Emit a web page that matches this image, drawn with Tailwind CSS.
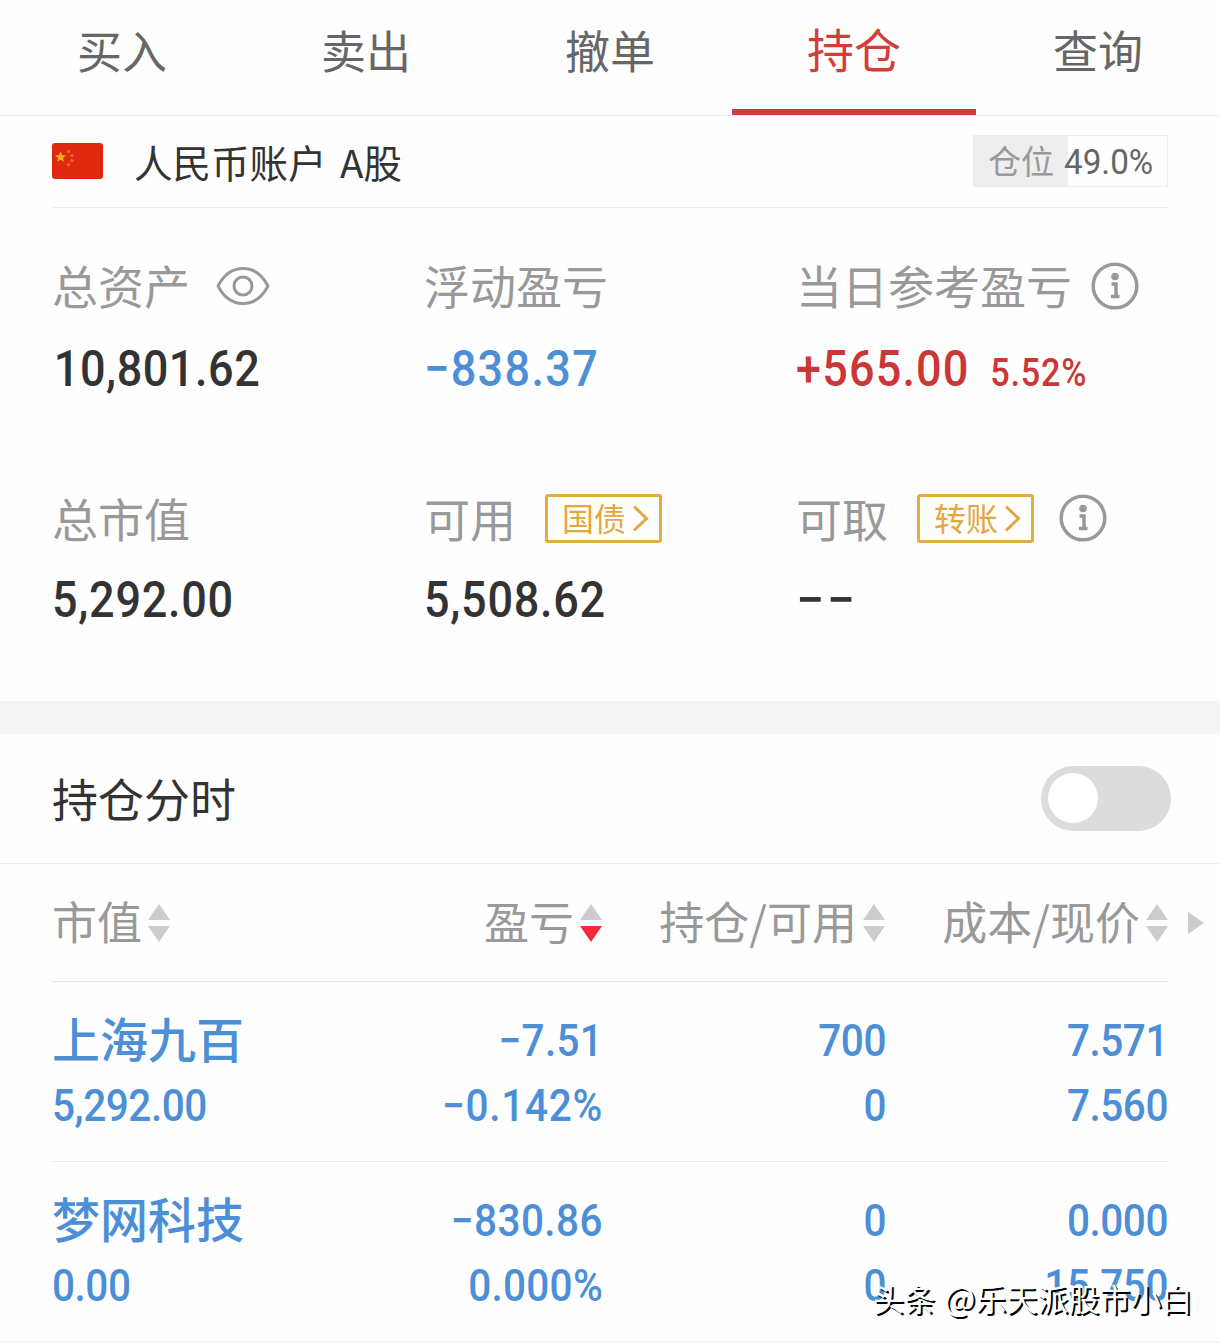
<!DOCTYPE html>
<html lang="zh-CN">
<head>
  <meta charset="UTF-8">
  <meta name="viewport" content="width=device-width, initial-scale=1.0">
  <title>持仓</title>
  <script src="https://cdn.jsdelivr.net/npm/@tailwindcss/browser@4"></script>
</head>
<body class="bg-[#fefefe] w-[1220px] h-[1343px] overflow-hidden relative font-['Noto_Sans_CJK_SC',sans-serif] text-[#333]">
  <!-- Tabs -->
  <nav class="grid grid-cols-5 h-[116px] border-b border-[#e9e9e9] text-[45px] leading-[100px] text-center text-[#666]">
    <a>买入</a>
    <a>卖出</a>
    <a>撤单</a>
    <a class="h-[115px] text-[47px] leading-[96px] text-[#d43c3c] border-b-6 border-[#d03c3e]">持仓</a>
    <a>查询</a>
  </nav>

  <!-- Account -->
  <div class="mx-[52px] h-[92px] flex items-center border-b border-[#eee]">
    <svg class="w-[51px] h-9 -mt-px" viewBox="0 0 51 36">
      <rect width="51" height="36" rx="3" fill="#de2910"/>
      <path d="M8.500 8.500l1.500 3.600 3.900.3-2.900 2.600.9 3.800-3.400-2.100-3.400 2.100.9-3.800-2.900-2.600 3.900-.3z" fill="#ffa928"/>
      <g fill="#f2662a">
        <circle cx="16.500" cy="8.500" r="1.600"/>
        <circle cx="20" cy="12.500" r="1.600"/>
        <circle cx="20" cy="17.500" r="1.600"/>
        <circle cx="16.500" cy="21.500" r="1.600"/>
      </g>
    </svg>
    <div class="ml-[31px] -mt-0.5 text-[38.500px] leading-[90px] [word-spacing:5px]">人民币账户 A股</div>
    <div class="ml-auto -mt-px w-[195px] h-[52px] flex items-center border border-[#eee] bg-linear-to-r from-[#eee] from-[94px] to-transparent to-[94px] whitespace-nowrap">
      <span class="ml-3.5 -mt-0.5 text-[33px] leading-[50px] text-[#999]">仓位</span>
      <span class="ml-2.5 mt-1 origin-left scale-x-95 font-[Roboto] text-[35px] leading-[50px] text-[#666]">49.0%</span>
    </div>
  </div>

  <!-- Summary -->
  <div class="mx-[52px] h-[493px] pt-[46px] grid grid-cols-3 grid-rows-[232px_232px] text-[46px] text-[#999] whitespace-nowrap">
    <div>
      <div class="h-16 flex items-center leading-[60px]"><span class="-mt-1">总资产</span>
        <svg class="ml-[26px] w-[54px] h-10" viewBox="0 0 54 40" fill="none" stroke="#999" stroke-width="3">
          <path d="M2 20C8 8.500 17 2.500 27 2.500S46 8.500 52 20C46 31.500 37 37.500 27 37.500S8 31.500 2 20z" stroke-linejoin="round"/>
          <circle cx="27" cy="20" r="9"/>
        </svg>
      </div>
      <div class="mt-[19px] pl-0.5 origin-left scale-x-90 leading-16 font-[Roboto] font-medium text-[50px] tracking-[0.600px] text-[#333]">10,801.62</div>
    </div>
    <div>
      <div class="h-16 leading-[60px]">浮动盈亏</div>
      <div class="mt-[19px] origin-left scale-x-90 leading-16 font-[Roboto] font-medium text-[50px] tracking-[1.500px] text-[#4d8fd6]">−838.37</div>
    </div>
    <div>
      <div class="h-16 flex items-center leading-[60px]"><span class="-mt-1">当日参考盈亏</span>
        <svg class="ml-[19px] w-12 h-12" viewBox="0 0 48 48" fill="none" stroke="#999" stroke-width="3.500">
          <circle cx="24" cy="24" r="21.800"/>
          <circle cx="24" cy="14.500" r="3.800" fill="#999" stroke="none"/>
          <path d="M20.500 22H25V34.500M20 34.500h8.500"/>
        </svg>
      </div>
      <div class="mt-[19px] flex items-baseline origin-left scale-x-90 leading-16 font-[Roboto] font-medium text-[50px] tracking-[1.300px] text-[#cb3636]">+565.00<span class="ml-[23px] text-[38px] tracking-[0.900px]">5.52%</span></div>
    </div>
    <div>
      <div class="h-16 leading-[62px]">总市值</div>
      <div class="mt-[18px] origin-left scale-x-90 leading-16 font-[Roboto] font-medium text-[50px] tracking-[0.800px] text-[#333]">5,292.00</div>
    </div>
    <div>
      <div class="h-16 flex items-center leading-[62px]"><span class="-mt-0.5">可用</span>
        <span class="ml-[29px] w-[117px] h-[49px] flex items-center border-3 border-[#e4ac3e] rounded-[3px] pl-3.5 text-[32px] leading-[43px] text-[#e4a63e]"><span class="-mt-0.5">国债</span>
          <svg class="ml-1.5 w-[17px] h-[27px]" viewBox="0 0 17 27" fill="none" stroke="#e4a63e" stroke-width="3"><path d="M2 1.500L14.500 13.500 2 25.500"/></svg>
        </span>
      </div>
      <div class="mt-[18px] origin-left scale-x-90 leading-16 font-[Roboto] font-medium text-[50px] tracking-[0.800px] text-[#333]">5,508.62</div>
    </div>
    <div>
      <div class="h-16 flex items-center leading-[62px]"><span class="-mt-0.5">可取</span>
        <span class="ml-[29px] w-[117px] h-[49px] flex items-center border-3 border-[#e4ac3e] rounded-[3px] pl-3.5 text-[32px] leading-[43px] text-[#e4a63e]"><span class="-mt-0.5">转账</span>
          <svg class="ml-1.5 w-[17px] h-[27px]" viewBox="0 0 17 27" fill="none" stroke="#e4a63e" stroke-width="3"><path d="M2 1.500L14.500 13.500 2 25.500"/></svg>
        </span>
        <svg class="ml-[25px] w-12 h-12" viewBox="0 0 48 48" fill="none" stroke="#999" stroke-width="3.500">
          <circle cx="24" cy="24" r="21.800"/>
          <circle cx="24" cy="14.500" r="3.800" fill="#999" stroke="none"/>
          <path d="M20.500 22H25V34.500M20 34.500h8.500"/>
        </svg>
      </div>
      <div class="mt-[18px] leading-16 font-[Roboto] font-medium text-[50px] tracking-[2.500px] text-[#333]">−−</div>
    </div>
  </div>

  <div class="h-[33px] bg-[#f4f4f4]"></div>

  <!-- Toggle -->
  <div class="h-[130px] pl-[52px] pr-[49px] flex items-center justify-between border-b border-[#eee]">
    <div class="-mt-1 text-[46px] leading-16">持仓分时</div>
    <div class="w-[130px] h-[65px] rounded-full bg-[#dcdcdc] p-[7px]">
      <div class="size-[50px] rounded-full bg-white"></div>
    </div>
  </div>

  <!-- Positions -->
  <div class="pl-[52px] flex items-center h-[117px] text-[45px] leading-16 text-[#999] whitespace-nowrap">
    <div class="w-[1116px] grid grid-cols-[268px_282px_283px_283px]">
      <div class="flex items-center"><span class="-mt-1">市值</span>
        <svg class="ml-1.5 w-[22px] h-[38px]" viewBox="0 0 22 38" fill="#ccc"><path d="M11 0l11 16H0z"/><path d="M11 38L0 22h22z"/></svg>
      </div>
      <div class="flex items-center justify-end"><span class="-mt-1">盈亏</span>
        <svg class="ml-1.5 w-[22px] h-[38px]" viewBox="0 0 22 38" fill="#ccc"><path d="M11 0l11 16H0z"/><path d="M11 38L0 22h22z" fill="#f5293c"/></svg>
      </div>
      <div class="flex items-center justify-end"><span class="-mt-1">持仓/可用</span>
        <svg class="ml-1.5 w-[22px] h-[38px]" viewBox="0 0 22 38" fill="#ccc"><path d="M11 0l11 16H0z"/><path d="M11 38L0 22h22z"/></svg>
      </div>
      <div class="flex items-center justify-end"><span class="-mt-1">成本/现价</span>
        <svg class="ml-1.5 w-[22px] h-[38px]" viewBox="0 0 22 38" fill="#ccc"><path d="M11 0l11 16H0z"/><path d="M11 38L0 22h22z"/></svg>
      </div>
    </div>
    <svg class="ml-5 w-4 h-[22px]" viewBox="0 0 16 22" fill="#ccc"><path d="M0 0l16 11L0 22z"/></svg>
  </div>

  <div class="mx-[52px] h-[180px] pt-[26px] border-t border-[#e2e2e2] grid grid-cols-[268px_283px_283px_282px] grid-rows-[65px_65px] text-right font-[Roboto] font-medium text-[45px] leading-[65px] tracking-[-0.500px] text-[#4d8fd6]">
    <div class="text-left -mt-[3px] font-['Noto_Sans_CJK_SC'] text-[48px] tracking-normal">上海九百</div>
    <div class="origin-right scale-x-90 tracking-[0.300px]">−7.51</div>
    <div class="origin-right scale-x-90">700</div>
    <div class="origin-right scale-x-90">7.571</div>
    <div class="text-left origin-left scale-x-90">5,292.00</div>
    <div class="origin-right scale-x-90 tracking-[0.800px]">−0.142%</div>
    <div class="origin-right scale-x-90">0</div>
    <div class="origin-right scale-x-90">7.560</div>
  </div>
  <div class="mx-[52px] h-[180px] pt-[26px] border-t border-[#eaeaea] grid grid-cols-[268px_283px_283px_282px] grid-rows-[65px_65px] text-right font-[Roboto] font-medium text-[45px] leading-[65px] tracking-[-0.500px] text-[#4d8fd6]">
    <div class="text-left -mt-[3px] font-['Noto_Sans_CJK_SC'] text-[48px] tracking-normal">梦网科技</div>
    <div class="origin-right scale-x-90 tracking-[0.500px]">−830.86</div>
    <div class="origin-right scale-x-90">0</div>
    <div class="origin-right scale-x-90">0.000</div>
    <div class="text-left origin-left scale-x-90">0.00</div>
    <div class="origin-right scale-x-90 tracking-[0.300px]">0.000%</div>
    <div class="origin-right scale-x-90">0</div>
    <div class="origin-right scale-x-90">15.750</div>
  </div>
  <div class="h-0.5 bg-[#f4f4f4]"></div>

  <!-- Watermark -->
  <div class="absolute left-[873px] top-[1273px] text-[31px] leading-12 whitespace-nowrap text-white [text-shadow:2px_2px_0_#000] [word-spacing:2px]">头条 <span class="text-[33px]">@</span>乐天派股市小白</div>
</body>
</html>
